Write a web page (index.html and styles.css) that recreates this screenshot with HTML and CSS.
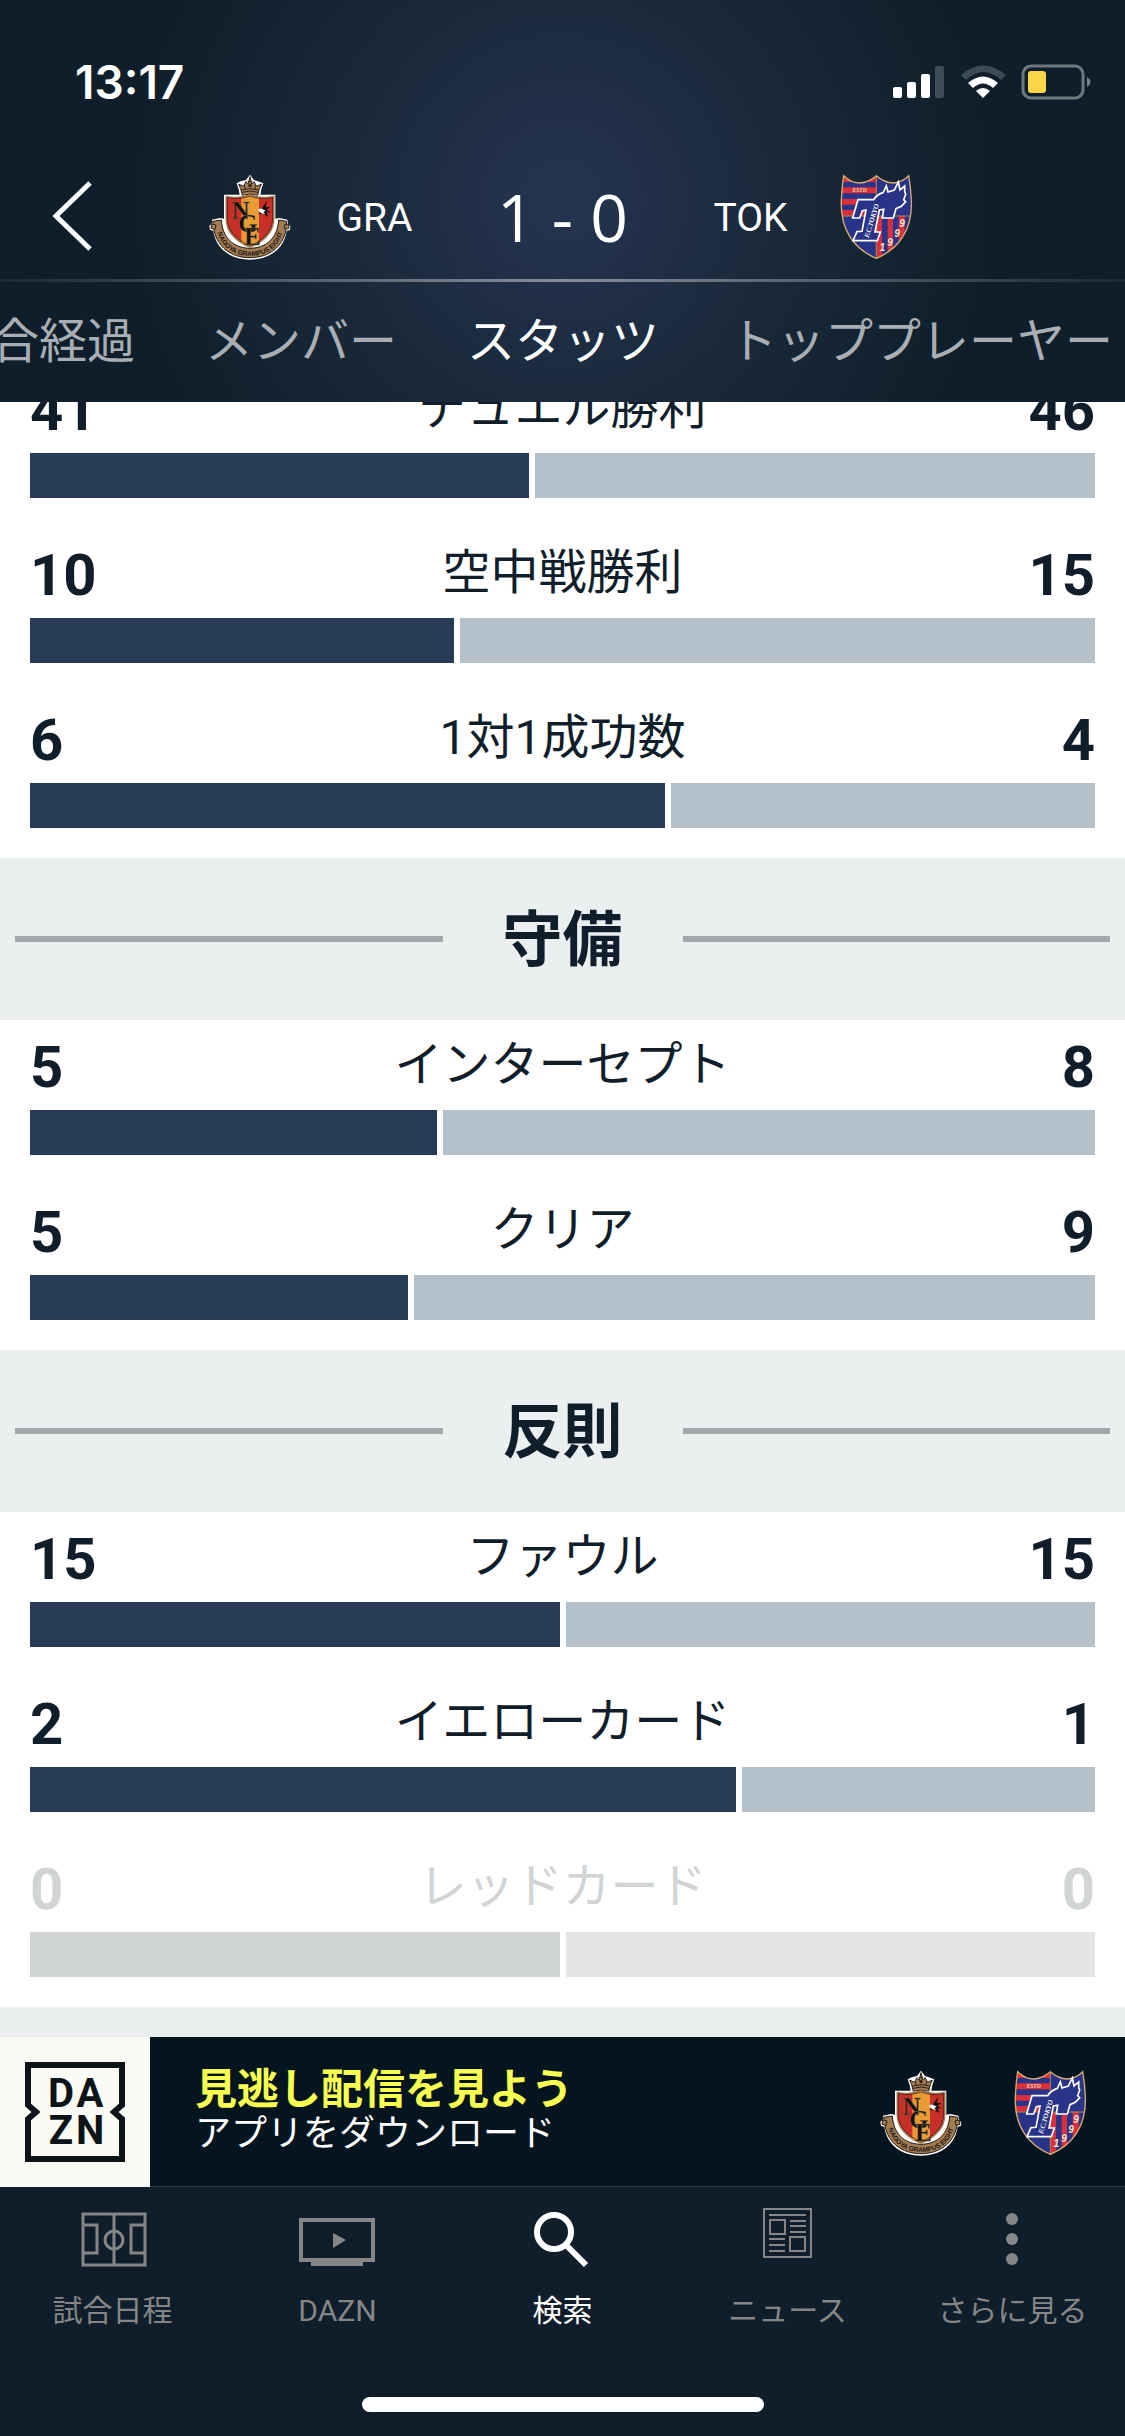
FILE: index.html
```html
<!DOCTYPE html>
<html lang="ja">
<head>
<meta charset="UTF-8" />
<meta name="viewport" content="width=device-width, initial-scale=1" />
<title>GRA 1 - 0 TOK スタッツ</title>
<link rel="stylesheet" href="styles.css">
</head>
<body>

<header class="header">
  <div class="status">
    <span class="time">13:17</span>
    <svg class="status-icons" width="200" height="36" viewBox="0 0 200 36" aria-hidden="true">
      <g fill="#fff">
        <rect x="1" y="23" width="9" height="11" rx="2"/>
        <rect x="15" y="18" width="9" height="16" rx="2"/>
        <rect x="29" y="10" width="9" height="24" rx="2"/>
        <rect x="43" y="2" width="9" height="32" rx="2" opacity=".2"/>
        <path d="M91 34L84 27Q91 21 98 27Z"/>
        <path d="M76 19Q91 6 106 19L101 24Q91 15 81 24Z"/>
        <path opacity=".2" d="M69 11Q91 -8 114 11L109 16Q91 0 74 16Z"/>
        <path opacity=".45" d="M195 13Q202 18 195 23Z"/>
      </g>
      <rect x="131" y="2" width="60" height="32" rx="8" fill="none" stroke="#fff" stroke-width="3" opacity=".4"/>
      <rect x="136" y="7" width="18" height="22" rx="3" fill="#f9d648"/>
    </svg>
  </div>

  <div class="scoreline">
    <button class="back" type="button" aria-label="戻る">
      <svg width="44" height="72" viewBox="0 0 44 72"><path d="M40 3L6 36L40 69" fill="none" stroke="#fff" stroke-width="5"/></svg>
    </button>
    <div class="match">
      <svg class="crest" viewBox="0 0 300 300" role="img" aria-label="名古屋グランパス">
        <g id="crest-gra">
          <path fill="#fff" d="M150 26L162 42L178 47L190 52L184 70L181 86H226V158L238 156L262 161L264 172L271 182L270 191L260 195C252 250 207 281 150 281C93 281 48 250 40 195L30 191L28 180L36 172L36 161L60 156L72 158V86H119L116 70L110 52L122 46L138 42Z"/>
          <path fill="#a27c52" stroke="#221a13" stroke-width="3" d="M38 166L64 162C67 213 98 246 150 247C202 246 233 213 236 162L260 166L258 192C248 242 208 275 150 275C92 275 52 242 42 192Z"/>
          <path fill="#fff" d="M75 165C78 218 108 243 150 243C192 243 222 218 225 165Z"/>
          <path fill="#a27c52" stroke="#2b2119" stroke-width="3" d="M35 174L48 177L45 190L33 187ZM265 174L252 177L255 190L267 187Z"/>
          <path fill="#a27c52" stroke="#2b2119" stroke-width="3" d="M127 88L122 68L116 54L130 61L138 47L145 55L150 32L155 55L162 47L170 61L184 54L178 68L173 88Q150 80 127 88Z"/>
          <path fill="none" stroke="#2b2119" stroke-width="3" d="M124 72Q150 64 176 72M126 79Q150 71 174 79M136 70L133 59M164 70L167 59M143 46L157 46"/>
          <circle cx="150" cy="59" r="5" fill="#2b2119"/>
          <path fill="#c82f28" stroke="#a27c52" stroke-width="5" d="M79 92Q118 99 150 87Q182 99 221 92V158C221 198 190 226 150 244C110 226 79 198 79 158Z"/>
          <path fill="#e89a35" d="M124 97Q139 94 150 88Q163 95 177 97V230L150 243L124 230Z"/>
          <path fill="none" stroke="#2b1714" stroke-width="2" d="M82 95Q118 102 150 90Q182 102 218 95V158C218 196 188 223 150 240C112 223 82 196 82 158Z"/>
          <path fill="#111" d="M202 103L197 122L211 124L199 131L212 139L200 139L204 153L190 143L174 145L185 137L174 132L187 125Z"/>
          <path fill="#fff" d="M173 131L183 127L197 134L190 139L196 145L184 142Z"/>
          <g class="gra-letters">
            <text x="95" y="158">N</text>
            <text x="115" y="199">G</text>
            <text x="133" y="238">E</text>
          </g>
          <path id="ribbon" fill="none" d="M48 172C52 234 92 270 150 270C208 270 248 234 252 172"/>
          <text class="gra-ribbon"><textPath href="#ribbon" startOffset="50%">NAGOYA GRAMPUS EIGHT</textPath></text>
        </g>
      </svg>
      <span class="code">GRA</span>
      <span class="score">1 - 0</span>
      <span class="code">TOK</span>
      <svg class="crest" viewBox="0 0 300 300" role="img" aria-label="FC東京">
        <clipPath id="shield">
          <path d="M53 29Q75 51 103 51Q130 48 151 29Q174 50 203 51Q230 48 248 29Q254 62 256 103C260 190 219 249 151 277C83 249 42 190 46 103Q48 62 53 29Z"/>
        </clipPath>
        <g id="crest-tok">
          <g clip-path="url(#shield)">
            <path fill="#293488" d="M40 20H260V280H40Z"/>
            <path fill="#d92e3b" d="M45 25H151V48H45ZM45 64H151V82H45ZM45 99H151V116H45ZM45 132H151V149H45Z"/>
            <path fill="#d92e3b" d="M151 150H168V280H151ZM185 150H201V280H185ZM218 150H236V280H218Z"/>
            <path fill="none" stroke="#b58b55" stroke-width="3" d="M151 28V278M46 150H256"/>
          </g>
          <path fill="none" stroke="#d9ad70" stroke-width="4" d="M53 29Q75 51 103 51Q130 48 151 29Q174 50 203 51Q230 48 248 29Q254 62 256 103C260 190 219 249 151 277C83 249 42 190 46 103Q48 62 53 29Z"/>
          <path fill="#293488" stroke="#fff" stroke-width="5" d="M96 101H143Q153 85 172 79L181 60L186 78L205 72L217 48L222 72L236 60V76L239 85L233 101L239 107L226 121L210 128L202 156H169L173 130L160 132L147 198H163L154 224H81L93 197L108 196L120 132L109 134L101 156H80Z"/>
          <text class="tok-estd" x="101" y="79">ESTD</text>
          <text class="tok-name" transform="translate(128 217) rotate(-73)">F.C.TOKYO</text>
          <g class="tok-year">
            <text x="169" y="256">1</text>
            <text x="192" y="240">9</text>
            <text x="213" y="213">9</text>
            <text x="228" y="183">9</text>
          </g>
        </g>
      </svg>
    </div>
  </div>

  <nav class="tabs">
    <a href="#">試合経過</a>
    <a href="#">メンバー</a>
    <a href="#" class="active">スタッツ</a>
    <a href="#">トッププレーヤー</a>
  </nav>
</header>

<main class="stats">
  <section class="group scrolled">
    <div class="stat">
      <div class="values"><b>41</b><span>デュエル勝利</span><b>46</b></div>
      <div class="bar"><i style="flex-grow: 41"></i><i style="flex-grow: 46"></i></div>
    </div>
    <div class="stat">
      <div class="values"><b>10</b><span>空中戦勝利</span><b>15</b></div>
      <div class="bar"><i style="flex-grow: 10"></i><i style="flex-grow: 15"></i></div>
    </div>
    <div class="stat">
      <div class="values"><b>6</b><span>1対1成功数</span><b>4</b></div>
      <div class="bar"><i style="flex-grow: 6"></i><i style="flex-grow: 4"></i></div>
    </div>
  </section>

  <h2 class="group-title"><span>守備</span></h2>
  <section class="group">
    <div class="stat">
      <div class="values"><b>5</b><span>インターセプト</span><b>8</b></div>
      <div class="bar"><i style="flex-grow: 5"></i><i style="flex-grow: 8"></i></div>
    </div>
    <div class="stat">
      <div class="values"><b>5</b><span>クリア</span><b>9</b></div>
      <div class="bar"><i style="flex-grow: 5"></i><i style="flex-grow: 9"></i></div>
    </div>
  </section>

  <h2 class="group-title"><span>反則</span></h2>
  <section class="group">
    <div class="stat">
      <div class="values"><b>15</b><span>ファウル</span><b>15</b></div>
      <div class="bar"><i style="flex-grow: 15"></i><i style="flex-grow: 15"></i></div>
    </div>
    <div class="stat">
      <div class="values"><b>2</b><span>イエローカード</span><b>1</b></div>
      <div class="bar"><i style="flex-grow: 2"></i><i style="flex-grow: 1"></i></div>
    </div>
    <div class="stat empty">
      <div class="values"><b>0</b><span>レッドカード</span><b>0</b></div>
      <div class="bar"><i style="flex-grow: 1"></i><i style="flex-grow: 1"></i></div>
    </div>
  </section>
</main>

<a class="banner" href="#">
  <svg class="dazn" viewBox="0 0 150 150" role="img" aria-label="DAZN">
    <path fill="none" stroke="#0d1418" stroke-width="6" d="M28 28H122V68L114 75L122 82V122H28V82L36 75L28 68Z"/>
    <text x="61" y="70">D</text><text x="90" y="70">A</text>
    <text x="61" y="107">Z</text><text x="90" y="107">N</text>
  </svg>
  <span class="banner-text">
    <strong>見逃し配信を見よう</strong>
    <span>アプリをダウンロード</span>
  </span>
  <svg class="crest" viewBox="0 0 300 300" aria-hidden="true"><use href="#crest-gra"/></svg>
  <svg class="crest" viewBox="0 0 300 300" aria-hidden="true"><use href="#crest-tok"/></svg>
</a>

<footer class="footer">
  <nav class="menu">
    <a href="#">
      <svg viewBox="0 0 80 60"><path fill="none" stroke="currentColor" stroke-width="3" d="M10 5H72V56H10ZM41 5V22M41 39V56M41 22V39M10 16H24V44H10M72 16H58V44H72"/><circle cx="41" cy="31" r="9" fill="none" stroke="currentColor" stroke-width="3"/></svg>
      試合日程
    </a>
    <a href="#">
      <svg viewBox="0 0 80 60"><path fill="none" stroke="currentColor" stroke-width="4" d="M3 11H75V51H3Z"/><path fill="currentColor" d="M13 52H65V57H13ZM35 24L48 31L35 39Z"/></svg>
      DAZN
    </a>
    <a href="#" class="active">
      <svg viewBox="0 0 80 60"><circle cx="31" cy="23" r="17" fill="none" stroke="currentColor" stroke-width="6"/><path fill="none" stroke="currentColor" stroke-width="6" d="M42 35L63 56"/></svg>
      検索
    </a>
    <a href="#">
      <svg viewBox="0 0 80 60"><path fill="none" stroke="currentColor" stroke-width="2" d="M16 0H63V48H16ZM21 6H58M22 11H37V25H22ZM42 12H58M42 17H58M42 23H58M42 28H57V42H42ZM21 30H37M21 36H37M21 42H37"/></svg>
      ニュース
    </a>
    <a href="#">
      <svg viewBox="0 0 80 60" fill="currentColor"><circle cx="39" cy="10" r="6"/><circle cx="39" cy="30" r="6"/><circle cx="39" cy="50" r="6"/></svg>
      さらに見る
    </a>
  </nav>
  <div class="home-indicator"></div>
</footer>

</body>
</html>
```
FILE: styles.css
```css
* { box-sizing: border-box; }
body {
  margin: 0;
  min-height: 100vh;
  display: flex;
  flex-direction: column;
  font-family: Roboto, "Noto Sans CJK JP", sans-serif;
  color: #0f1e2a;
  background: #ebeff0;
  overflow-x: hidden;
}
a { color: inherit; text-decoration: none; }
.crest {
  width: 100px;
  height: 100px;
  flex: none;
}

/* header */
.header {
  position: relative;
  z-index: 1;
  color: #fff;
  background: radial-gradient(circle at 50% 200px, #26354f 0, #1f2e45 120px, #1a2a3a 210px, #0f1e2a 430px);
}
.status {
  display: flex;
  justify-content: space-between;
  align-items: center;
  height: 153px;
  padding: 11px 33px 0 75px;
}
.time {
  font-family: Inter, sans-serif;
  font-size: 46px;
  font-weight: 600;
}
.scoreline {
  position: relative;
  display: grid;
  grid-template-columns: 1fr auto 1fr;
  align-items: center;
  height: 126px;
}
.scoreline::after {
  content: "";
  position: absolute;
  left: 0;
  right: 0;
  bottom: -3px;
  height: 3px;
  background: linear-gradient(90deg, #1c2a36, #868d98 50%, #1c2a36);
}
.back {
  justify-self: start;
  margin-left: 50px;
  padding: 0;
  border: 0;
  background: none;
  cursor: pointer;
}
.back svg { display: block; }
.match {
  display: flex;
  align-items: center;
  margin: 0 -12px;
}
.match .crest { margin: 0 12px; }
.code {
  width: 126px;
  padding-top: 4px;
  font-size: 39px;
  text-align: center;
}
.score {
  width: 250px;
  font-family: "Open Sans", sans-serif;
  font-size: 66px;
  line-height: 80px;
  text-align: center;
}
.tabs {
  display: flex;
  height: 123px;
  margin-left: -92px;
  padding-top: 2px;
  overflow: hidden;
  align-items: center;
}
.tabs a {
  flex: none;
  padding: 0 35px;
  font-size: 48px;
  line-height: 60px;
  color: #a8aeb4;
}
.tabs a.active { color: #fff; }

/* stats */
.stats { flex: 1; }
.group {
  padding: 0 30px;
  background: #fff;
}
.scrolled { margin-top: -39px; }
.stat { padding-bottom: 30px; }
.values {
  display: grid;
  grid-template-columns: 1fr auto 1fr;
  height: 90px;
  line-height: 90px;
}
.values b {
  padding-top: 2px;
  font-size: 58px;
  font-weight: 700;
}
.values b:last-child { text-align: right; }
.values span { font-size: 48px; }
.bar {
  display: flex;
  gap: 6px;
  height: 45px;
}
.bar i {
  flex: 0 1 0;
  background: #273b56;
}
.bar i:last-child { background: #b5c1ca; }
.empty { color: #d1d4d4; }
.empty .bar i { background: #d1d4d4; }
.empty .bar i:last-child { background: #e2e4e5; }
.group-title {
  display: flex;
  align-items: center;
  height: 162px;
  margin: 0;
  padding: 0 15px;
  font-size: 60px;
  font-weight: 700;
}
.group-title span {
  padding: 0 60px 10px;
}
.group-title::before,
.group-title::after {
  content: "";
  flex: 1;
  height: 6px;
  background: #a4a8ab;
}

/* banner */
.banner {
  display: flex;
  align-items: center;
  height: 150px;
  padding-right: 25px;
  color: #fff;
  background: #041520;
  border-bottom: 1px solid #2a3741;
}
.dazn {
  width: 150px;
  height: 150px;
  margin-bottom: -1px;
  background: #f9faf4;
}
.dazn text {
  font-size: 40px;
  font-weight: 700;
  text-anchor: middle;
  fill: #0d1418;
}
.banner-text {
  flex: 1;
  padding-left: 45px;
  font-size: 36px;
  line-height: 44px;
}
.banner-text strong,
.banner-text span { display: block; }
.banner-text strong {
  font-size: 42px;
  font-weight: 700;
  color: #f9ff50;
}
.banner .crest + .crest { margin-left: 29px; }

/* bottom menu */
.footer {
  height: 249px;
  color: #868686;
  background: #0f1e2a;
}
.menu { display: flex; }
.menu a {
  flex: 1;
  padding-top: 22px;
  font-size: 30px;
  line-height: 40px;
  text-align: center;
}
.menu svg {
  display: block;
  width: 80px;
  height: 60px;
  margin: 0 auto 22px;
  overflow: visible;
}
.menu a.active { color: #fff; }
.home-indicator {
  width: 402px;
  height: 15px;
  margin: 66px auto 0;
  border-radius: 8px;
  background: #fff;
}

/* lettering on the crests */
.gra-letters {
  font: 700 74px "Liberation Serif", serif;
  fill: #111;
  stroke: #8c6c4a;
  stroke-width: 1px;
}
.gra-ribbon {
  font: 700 20px "Liberation Sans", sans-serif;
  fill: #1c1510;
  text-anchor: middle;
}
.tok-estd {
  font: italic 700 17px "Liberation Serif", serif;
  fill: #f4dfb8;
  text-anchor: middle;
}
.tok-name {
  font: italic 700 21px "Liberation Serif", serif;
  fill: #fff;
}
.tok-year {
  font: italic 700 30px "Liberation Sans", sans-serif;
  fill: #f6e6c4;
  text-anchor: middle;
}
```
